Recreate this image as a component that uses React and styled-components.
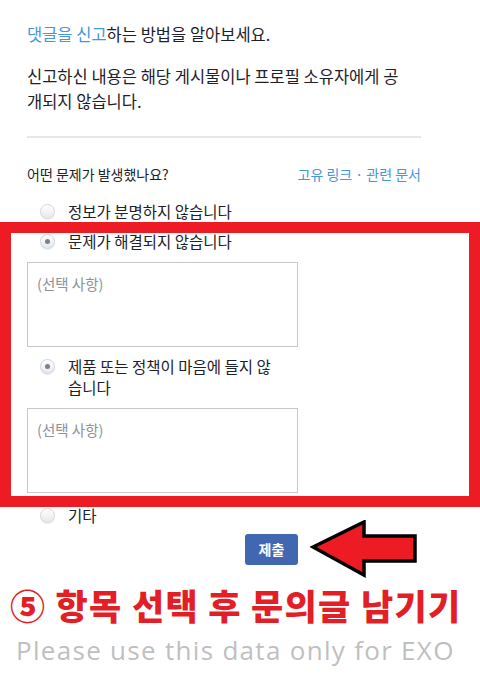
import React from "react";
import styled, { createGlobalStyle } from "styled-components";

const GlobalStyle = createGlobalStyle`
  body {
    margin: 0;
    background: #fff;
    font-family: "Noto Sans CJK KR", "Noto Sans", sans-serif;
    color: #1d2129;
  }
`;

const options = [
  { label: "정보가 분명하지 않습니다", checked: false },
  { label: "문제가 해결되지 않습니다", checked: true },
  { label: "제품 또는 정책이 마음에 들지 않습니다", checked: true },
  { label: "기타", checked: false },
];

function Radio({ label, checked, gap }) {
  return (
    <RadioRow gap={gap}>
      <RadioDot checked={checked} />
      <RadioLabel>{label}</RadioLabel>
    </RadioRow>
  );
}

function App() {
  return (
    <Page>
      <GlobalStyle />
      <Intro>
        <Link>댓글을 신고</Link>하는 방법을 알아보세요.
      </Intro>
      <Notice>신고하신 내용은 해당 게시물이나 프로필 소유자에게 공개되지 않습니다.</Notice>
      <Divider />
      <Header>
        <Question>어떤 문제가 발생했나요?</Question>
        <Links>
          <Link>고유 링크</Link> · <Link>관련 문서</Link>
        </Links>
      </Header>
      <Radio {...options[0]} gap={17} />
      <Highlight>
        <Radio {...options[1]} gap={9} />
        <Note placeholder="(선택 사항)" />
        <Radio {...options[2]} gap={9} />
        <Note placeholder="(선택 사항)" />
      </Highlight>
      <Radio {...options[3]} gap={12} />
      <SubmitRow>
        <Submit>제출</Submit>
        <svg width="110" height="58" viewBox="0 0 110 58">
          <path
            d="M3 27 L54 2 L54 16 L105 16 L105 41 L54 41 L54 55 Z"
            fill="#ed1c24"
            stroke="#000"
            strokeWidth="3.5"
            strokeLinejoin="miter"
          />
        </svg>
      </SubmitRow>
      <Caption>⑤ 항목 선택 후 문의글 남기기</Caption>
      <Watermark>Please use this data only for EXO</Watermark>
    </Page>
  );
}

export default App;

const Page = styled.div`
  width: 480px;
  height: 675px;
  box-sizing: border-box;
  padding: 22px 0 0 27px;
  overflow: hidden;
`;

const Intro = styled.div`
  font-size: 16.5px;
  line-height: 24px;
`;

const Link = styled.span`
  color: #4597d6;
`;

const Notice = styled.div`
  margin-top: 18px;
  width: 384px;
  font-size: 16.5px;
  line-height: 25px;
`;

const Divider = styled.div`
  margin-top: 22px;
  width: 394px;
  height: 2px;
  background: #e4e6e9;
`;

const Header = styled.div`
  margin-top: 26px;
  width: 394px;
  display: flex;
  justify-content: space-between;
  align-items: center;
  line-height: 20px;
`;

const Question = styled.span`
  font-size: 14px;
`;

const Links = styled.span`
  font-size: 14px;
  color: #4597d6;
`;

const RadioRow = styled.div`
  display: flex;
  align-items: flex-start;
  padding-left: 13px;
  margin-top: ${(p) => p.gap}px;
`;

const RadioDot = styled.span`
  position: relative;
  flex: none;
  width: 15px;
  height: 15px;
  margin-top: 3px;
  border-radius: 50%;
  box-sizing: border-box;
  border: 1px solid ${(p) => (p.checked ? "#c9d4e8" : "#d4d7dc")};
  background: linear-gradient(#ffffff, #e6e8eb);
  box-shadow: 0 1px 1px rgba(0, 0, 0, 0.08);
  &::after {
    content: "";
    display: ${(p) => (p.checked ? "block" : "none")};
    position: absolute;
    left: 4px;
    top: 4px;
    width: 5px;
    height: 5px;
    border-radius: 50%;
    background: #7d8087;
  }
`;

const RadioLabel = styled.span`
  margin-left: 13px;
  max-width: 214px;
  font-size: 15.5px;
  line-height: 21px;
`;

const Highlight = styled.div`
  position: relative;
  &::after {
    content: "";
    position: absolute;
    top: -9px;
    left: -27px;
    width: 480px;
    bottom: -14px;
    box-sizing: border-box;
    border: 11px solid #ed1c24;
    pointer-events: none;
  }
`;

const Note = styled.textarea`
  display: block;
  margin-top: 10px;
  width: 271px;
  height: 85px;
  box-sizing: border-box;
  padding: 10px 9px;
  border: 1px solid #c4c8cf;
  border-radius: 0;
  resize: none;
  font-family: "Noto Sans CJK KR", "Noto Sans", sans-serif;
  font-size: 14.5px;
  &::placeholder {
    color: #8d9199;
  }
`;

const SubmitRow = styled.div`
  display: flex;
  align-items: center;
  margin-top: -6px;
  padding-left: 218px;
  svg {
    margin-left: 12px;
  }
`;

const Submit = styled.button`
  width: 53px;
  height: 31px;
  border: none;
  border-radius: 3px;
  background: #4267b2;
  color: #fff;
  font-family: "Noto Sans CJK KR", sans-serif;
  font-weight: 700;
  font-size: 14px;
  padding: 0;
`;

const Caption = styled.div`
  margin: 4px 0 0 -17px;
  color: #e21f26;
  font-size: 35px;
  font-weight: 900;
  letter-spacing: 1.3px;
  line-height: 46px;
  white-space: nowrap;
`;

const Watermark = styled.div`
  margin: 0 0 0 -11px;
  color: #bfbfbf;
  font-family: "Open Sans", "Liberation Sans", sans-serif;
  font-size: 26px;
  letter-spacing: 1.3px;
  line-height: 44px;
  white-space: nowrap;
`;
